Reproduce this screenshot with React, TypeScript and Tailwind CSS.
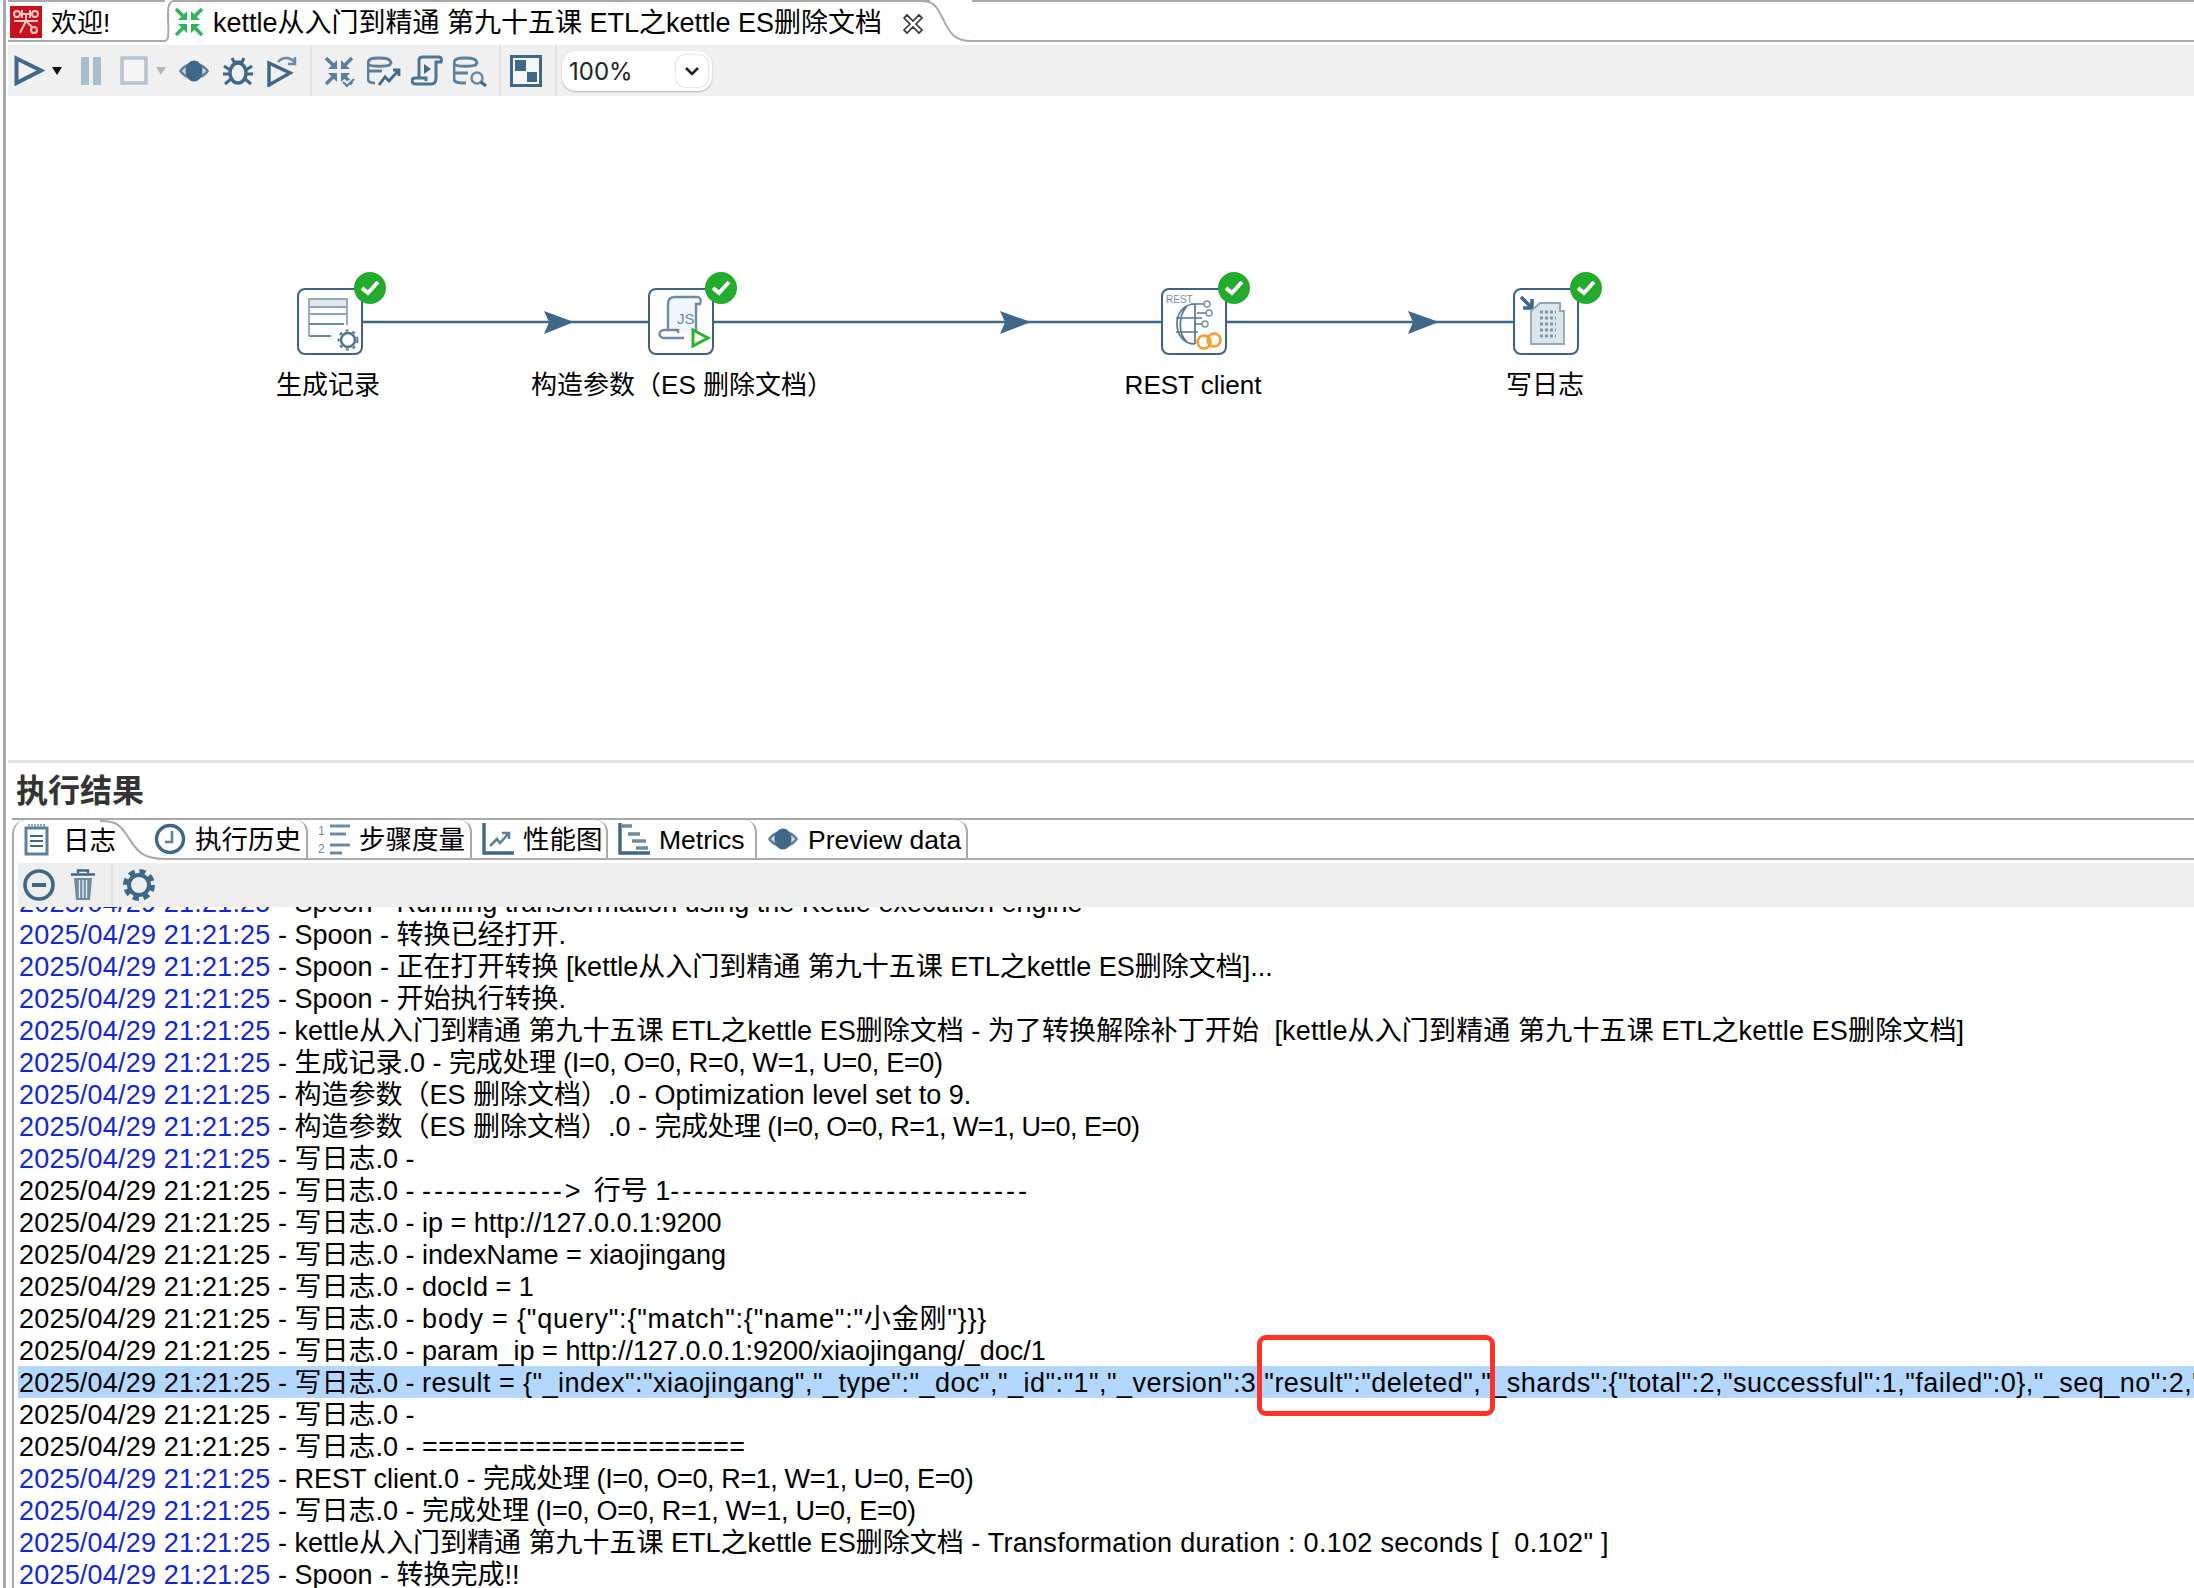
import React from "react";

const FONT = "font-['Liberation_Sans','Noto_Sans_CJK_SC',sans-serif]";
const BLUE = "#3f6888";
const TITLE = "kettle从入门到精通 第九十五课 ETL之kettle ES删除文档";

type Row = { blue?: boolean; selected?: boolean; text: string; tail?: React.ReactNode; tailClass?: string };

const STATS = "tracking-[-0.3px]";

const rows: Row[] = [
  { blue: true, text: " - Spoon - 转换已经打开." },
  { blue: true, text: ` - Spoon - 正在打开转换 [${TITLE}]...` },
  { blue: true, text: " - Spoon - 开始执行转换." },
  { blue: true, text: ` - ${TITLE} - `, tail: `为了转换解除补丁开始  [${TITLE}]`, tailClass: "tracking-[0.15px]" },
  { blue: true, text: " - 生成记录.0 - ", tail: "完成处理 (I=0, O=0, R=0, W=1, U=0, E=0)", tailClass: STATS },
  { blue: true, text: " - 构造参数（ES 删除文档）.0 - Optimization level set to 9." },
  { blue: true, text: " - 构造参数（ES 删除文档）.0 - ", tail: "完成处理 (I=0, O=0, R=1, W=1, U=0, E=0)", tailClass: "tracking-[-0.55px]" },
  { blue: true, text: " - 写日志.0 - " },
  {
    text: " - 写日志.0 - ",
    tail: (
      <>
        <span className="tracking-[2.9px]">------------&gt; </span>行号 1<span className="tracking-[3px]">------------------------------</span>
      </>
    ),
  },
  { text: " - 写日志.0 - ip = http://127.0.0.1:9200" },
  { text: " - 写日志.0 - indexName = xiaojingang" },
  { text: " - 写日志.0 - docId = 1" },
  { text: " - 写日志.0 - ", tail: 'body = {"query":{"match":{"name":"小金刚"}}}', tailClass: "tracking-[0.8px]" },
  { text: " - 写日志.0 - param_ip = http://127.0.0.1:9200/xiaojingang/_doc/1" },
  {
    selected: true,
    text: " - 写日志.0 - ",
    tail: 'result = {"_index":"xiaojingang","_type":"_doc","_id":"1","_version":3,"result":"deleted","_shards":{"total":2,"successful":1,"failed":0},"_seq_no":2,"_primary_term":1}',
    tailClass: "tracking-[0.47px]",
  },
  { text: " - 写日志.0 - " },
  { text: " - 写日志.0 - ", tail: "====================", tailClass: "tracking-[0.4px]" },
  { blue: true, text: " - REST client.0 - ", tail: "完成处理 (I=0, O=0, R=1, W=1, U=0, E=0)", tailClass: "tracking-[-0.4px]" },
  { blue: true, text: " - 写日志.0 - ", tail: "完成处理 (I=0, O=0, R=1, W=1, U=0, E=0)", tailClass: STATS },
  { blue: true, text: ` - ${TITLE} - `, tail: 'Transformation duration : 0.102 seconds [  0.102" ]', tailClass: "tracking-[0.3px]" },
  { blue: true, text: " - Spoon - 转换完成!!" },
];

function Ico({ w = 32, h = 32, className = "", children }: { w?: number; h?: number; className?: string; children: React.ReactNode }) {
  return (
    <svg width={w} height={h} viewBox={`0 0 ${w} ${h}`} fill="none" className={`shrink-0 ${className}`}>
      {children}
    </svg>
  );
}

function SpoonLogo() {
  return (
    <Ico w={32} h={32}>
      <rect width="32" height="32" fill="#c9101c" />
      <g stroke="#f6c9c9" strokeWidth="2" fill="none">
        <circle cx="7" cy="8" r="3" />
        <circle cx="25" cy="8" r="3" />
        <circle cx="24" cy="24" r="3" />
        <path d="M10 8h12M4 15h24M16 8v7l-6 12M16 15l6 6M12 4v8M20 4v8" />
      </g>
    </Ico>
  );
}

function Converge({ color, check }: { color: string; check?: boolean }) {
  return (
    <Ico w={32} h={32}>
      <g stroke={color} strokeWidth="3.4" fill="none">
        <path d="M3 3l9 9M29 3l-9 9M3 29l9-9M29 29l-9-9" />
      </g>
      <g fill={color}>
        <path d="M14 5v9H5zM18 5v9h9zM14 27v-9H5zM18 27v-9h9z" />
      </g>
      {check && <path d="M20 27l4 4 7-7" stroke={color} strokeWidth="2" fill="#f0f0f0" />}
    </Ico>
  );
}

function Run() {
  return (
    <Ico w={32} h={32}>
      <path d="M2.500 3.500L27 15.500L2.500 28z" stroke={BLUE} strokeWidth="4" strokeLinejoin="miter" />
    </Ico>
  );
}

function Eye() {
  return (
    <Ico w={32} h={24}>
      <path d="M1 12C7 1 25 1 31 12C25 23 7 23 1 12z" fill="#5f7f99" />
      <path d="M4 12C9 5 23 5 28 12C23 19 9 19 4 12z" fill="#cdd9e3" />
      <ellipse cx="16" cy="12" rx="8.500" ry="10.500" fill={BLUE} />
    </Ico>
  );
}

function Bug() {
  return (
    <Ico w={32} h={32}>
      <ellipse cx="16" cy="18" rx="8" ry="10" stroke={BLUE} strokeWidth="3.500" />
      <path d="M10 3l3 6M22 3l-3 6M12 7h8M2 11l6 4M30 11l-6 4M1 19h7M31 19h-7M3 29l6-5M29 29l-6-5" stroke={BLUE} strokeWidth="3" />
    </Ico>
  );
}

function RunOptions() {
  return (
    <Ico w={32} h={32}>
      <path d="M3 8L24 18L3 30z" stroke={BLUE} strokeWidth="3.500" />
      <path d="M12 7C17 1 25 2 29 8M29 2v7h-7" stroke="#6d8aa2" strokeWidth="2.500" />
    </Ico>
  );
}

function DbWrite() {
  return (
    <Ico w={34} h={32}>
      <path d="M24 9C24 4 20 3 12 3S1 4 1 9v15c0 3 3 4 7 4M1 9c2 3 20 3 23 0M1 16h14" stroke="#5c7f9c" strokeWidth="2.800" />
      <path d="M12 30l6-8 4 4 9-10M26 15h6v6" stroke={BLUE} strokeWidth="2.800" />
    </Ico>
  );
}

function Script() {
  return (
    <Ico w={32} h={32}>
      <path d="M8 23V5c0-2 2-3 4-3h16c2 0 3 2 2 5h-5v16c0 4-2 6-5 6H5c-3 0-4-2-4-3 0-2 1-3 3-3h11v3" stroke="#4f7492" strokeWidth="3" />
      <path d="M13 9l7 5-7 5z" fill={BLUE} />
    </Ico>
  );
}

function DbSearch() {
  return (
    <Ico w={34} h={32}>
      <path d="M24 9C24 4 20 3 12 3S1 4 1 9v15c0 3 3 4 12 4M1 9c2 3 20 3 23 0M1 18h14" stroke="#5c7f9c" strokeWidth="2.800" />
      <circle cx="24" cy="23" r="5.500" stroke="#6d8aa2" strokeWidth="2.500" />
      <path d="M28 27l5 4" stroke={BLUE} strokeWidth="3" />
    </Ico>
  );
}

function Grid() {
  return (
    <Ico w={32} h={32}>
      <rect x="1.500" y="1.500" width="29" height="29" stroke={BLUE} strokeWidth="3" fill="#f7f7f7" />
      <rect x="5" y="5" width="11" height="11" fill={BLUE} />
      <rect x="17" y="17" width="10" height="10" fill={BLUE} />
    </Ico>
  );
}

function Caret({ color, className }: { color: string; className: string }) {
  return (
    <Ico w={10} h={8} className={className}>
      <path d="M0 0h10L5 8z" fill={color} />
    </Ico>
  );
}

function TabCurveDown({ w, h, className = "" }: { w: number; h: number; className?: string }) {
  return (
    <Ico w={w} h={h} className={className}>
      <path d={`M0 1C${w * 0.22} 1 ${w * 0.3} 4 ${w * 0.4} ${h * 0.35}C${w * 0.55} ${h * 0.7} ${w * 0.6} ${h - 1} ${w} ${h - 1}`} stroke="#a9a9a9" strokeWidth="2" />
    </Ico>
  );
}

function TopTabs() {
  return (
    <div className="flex h-[42px] bg-white text-[26px] text-black">
      <div className="flex w-[157px] items-start gap-[9px] border-t-2 border-b-2 border-[#a9a9a9] pl-[2px] pt-[4px]">
        <SpoonLogo />
        <span className="leading-[34px]">欢迎!</span>
      </div>
      <Ico w={8} h={42}>
        <path d="M0 41C5 40 3 30 3 12C3 5 5 2 8 1" stroke="#a9a9a9" strokeWidth="2" />
      </Ico>
      <div className="flex w-[757px] items-start gap-[8px] border-t-2 border-[#a9a9a9] pt-[4px]">
        <Converge color="#2fb45a" />
        <span className="whitespace-nowrap text-[27px] leading-[34px]">{TITLE}</span>
        <Ico w={22} h={22} className="ml-[12px] mt-[7px]">
          <path d="M2 5l3-3 6 6 6-6 3 3-6 6 6 6-3 3-6-6-6 6-3-3 6-6z" stroke="#333" strokeWidth="1.600" />
        </Ico>
      </div>
      <TabCurveDown w={52} h={42} className="-ml-[10px]" />
      <div className="flex-1 border-b-2 border-t-2 border-[#a9a9a9]" />
    </div>
  );
}

function MainToolbar() {
  return (
    <div className="mt-[3px] flex h-[51px] items-center bg-[#f0f0f0] pl-[6px]">
      <Run />
      <Caret color="#111" className="ml-[6px]" />
      <Ico w={22} h={30} className="ml-[18px]">
        <rect x="1" y="1" width="8" height="28" fill="#a9bccb" />
        <rect x="13" y="1" width="8" height="28" fill="#a9bccb" />
      </Ico>
      <Ico w={28} h={30} className="ml-[18px]">
        <rect x="2" y="2" width="24" height="25" stroke="#b5c4d0" strokeWidth="3.500" fill="#f5f5f5" />
      </Ico>
      <Caret color="#b8b8b8" className="ml-[8px]" />
      <span className="ml-[12px]"><Eye /></span>
      <span className="ml-[12px]"><Bug /></span>
      <span className="ml-[12px]"><RunOptions /></span>
      <div className="ml-[12px] h-full w-[2px] bg-[#e2e2e2]" />
      <span className="ml-[11px]"><Converge color="#5c7f9c" check /></span>
      <span className="ml-[12px]"><DbWrite /></span>
      <span className="ml-[10px]"><Script /></span>
      <span className="ml-[10px]"><DbSearch /></span>
      <div className="ml-[12px] h-full w-[2px] bg-[#e2e2e2]" />
      <span className="ml-[9px] mr-[13px]"><Grid /></span>
      <div className="h-full w-[2px] bg-[#e2e2e2]" />
      <div className="ml-[5px] flex h-[40px] w-[150px] items-center justify-between rounded-[14px] bg-white pl-[7px] pr-[4px] shadow-[0_1px_2px_rgba(0,0,0,0.25)]">
        <span className="mt-[2px] font-['Inter',sans-serif] text-[24px] text-[#222]">100%</span>
        <div className="flex h-[32px] w-[32px] items-center justify-center rounded-[9px] bg-white shadow-[0_0_2px_rgba(0,0,0,0.35)]">
          <Ico w={16} h={10}>
            <path d="M2 2l6 6 6-6" stroke="#222" strokeWidth="2.600" />
          </Ico>
        </div>
      </div>
    </div>
  );
}

const NODES = [
  { x: 297, label: "生成记录", labelX: 328 },
  { x: 648, label: "构造参数（ES 删除文档）", labelX: 682 },
  { x: 1161, label: "REST client", labelX: 1193 },
  { x: 1513, label: "写日志", labelX: 1545 },
];

function NodeIcon({ i }: { i: number }) {
  if (i === 0) {
    return (
      <Ico w={66} h={67}>
        <path d="M12 48V11h38v26M12 19h38M12 26h38" stroke="#8fa5b8" strokeWidth="1.800" />
        <path d="M12 36h35M12 48h22" stroke="#6d8aa2" strokeWidth="2" />
        <rect x="13" y="12" width="36" height="6" fill="#dfe6ec" />
        <circle cx="51" cy="52" r="7" stroke="#52718c" strokeWidth="2.500" fill="#fff" />
        <circle cx="51" cy="52" r="9.500" stroke="#52718c" strokeWidth="2" strokeDasharray="3 4" />
      </Ico>
    );
  }
  if (i === 1) {
    return (
      <Ico w={66} h={67}>
        <path d="M20 48V16c0-5 3-7 7-7h22c3 0 5 3 3 7h-4v28" stroke="#6d8aa2" strokeWidth="2.400" fill="#f1f6fb" />
        <path d="M36 50H16c-6 0-6 -8 0-8h14v3" stroke="#6d8aa2" strokeWidth="2.400" fill="#fff" />
        <text x="29" y="36" fontSize="15" fill="#6d8aa2" fontFamily="Liberation Sans">JS</text>
        <path d="M45 42l15 8-15 8z" stroke="#26b32f" strokeWidth="3" fill="#fff" />
      </Ico>
    );
  }
  if (i === 2) {
    return (
      <Ico w={66} h={67}>
        <text x="5" y="15" fontSize="10" fill="#7891a6" fontFamily="Liberation Sans">REST</text>
        <path d="M34 16C10 16 10 56 34 56M26 18C17 28 17 46 26 54M34 16v40M15 30h26M15 44h22M30 16h14M36 25h12M34 36h10" stroke="#55778f" strokeWidth="1.700" />
        <circle cx="46" cy="16" r="3" stroke="#7891a6" strokeWidth="1.500" fill="#fff" />
        <circle cx="48" cy="25" r="3" stroke="#7891a6" strokeWidth="1.500" fill="#fff" />
        <circle cx="44" cy="36" r="3" stroke="#7891a6" strokeWidth="1.500" fill="#fff" />
        <circle cx="43" cy="54" r="6.500" stroke="#f5a02c" strokeWidth="2.600" fill="#fff" />
        <circle cx="53" cy="52" r="6.500" stroke="#f5a02c" strokeWidth="2.600" />
      </Ico>
    );
  }
  return (
    <Ico w={66} h={67}>
      <path d="M8 9l11 11M19 11v9h-9" stroke={BLUE} strokeWidth="3.500" />
      <path d="M18 56V23l9-8h20v8h4v33z" fill="#dde5ec" stroke="#8fa5b8" strokeWidth="1.800" />
      <path d="M27 24h16M27 30h16M27 36h16M27 42h16M27 48h16" stroke="#7c95aa" strokeWidth="3" strokeDasharray="3 2" />
    </Ico>
  );
}

function Canvas() {
  return (
    <div className="relative h-[664px] bg-white">
      <svg width="1600" height="60" viewBox="0 0 1600 60" className="absolute -left-[8px] top-[196px]" fill="none">
        <path d="M360 30H1515" stroke={BLUE} strokeWidth="2.400" />
        <path d="M544 19L574 30L544 42L549 30z" fill={BLUE} />
        <path d="M1000 19L1031 30L1000 42L1005 30z" fill={BLUE} />
        <path d="M1408 19L1439 30L1408 42L1413 30z" fill={BLUE} />
      </svg>
      {NODES.map((n, i) => (
        <React.Fragment key={n.label}>
          <div className="absolute top-[192px] h-[67px] w-[66px] overflow-hidden rounded-[8px] border-2 border-[#3f6282] bg-white" style={{ left: n.x - 8 }}>
            <div className="-m-[2px]">
              <NodeIcon i={i} />
            </div>
          </div>
          <div className="absolute top-[176px] flex h-[32px] w-[32px] items-center justify-center rounded-full bg-[#22ab2c]" style={{ left: n.x + 49 }}>
            <Ico w={20} h={16}>
              <path d="M2 8l6 5 10-11" stroke="#fff" strokeWidth="4" />
            </Ico>
          </div>
          <div className="absolute top-[272px] -translate-x-1/2 whitespace-nowrap text-[26px] leading-[34px] text-black" style={{ left: n.labelX - 8 }}>
            {n.label}
          </div>
        </React.Fragment>
      ))}
    </div>
  );
}

function ResultTab({ icon, label, w }: { icon: React.ReactNode; label: string; w: number }) {
  return (
    <div className="flex h-full shrink-0 items-center gap-[9px] rounded-tr-[12px] border-r-2 border-[#a9a9a9] pl-[10px]" style={{ width: w }}>
      {icon}
      <span className="mt-[3px] whitespace-nowrap">{label}</span>
    </div>
  );
}

function ResultTabs() {
  return (
    <div className="relative flex h-[42px] border-t-2 border-[#a9a9a9] text-[26.5px] text-black">
      <div className="flex h-full w-[88px] shrink-0 items-center gap-[14px] rounded-tl-[14px] border-l-2 border-[#a9a9a9] pl-[10px]">
        <Ico w={25} h={32} className="shrink-0">
          <rect x="2" y="4" width="21" height="26" stroke="#5c7f9c" strokeWidth="3" />
          <path d="M6 12h13M6 17h13M6 22h13" stroke={BLUE} strokeWidth="2" />
          <path d="M4 1.500h17" stroke="#8fa5b8" strokeWidth="3" strokeDasharray="2 1" />
        </Ico>
        <span className="mt-[3px] whitespace-nowrap">日志</span>
      </div>
      <TabCurveDown w={65} h={40} />
      <div className="flex h-full flex-1 border-b-2 border-[#a9a9a9]">
        <ResultTab
          w={143}
          label="执行历史"
          icon={
            <Ico w={32} h={32} className="-ml-[21px]">
              <circle cx="16" cy="16" r="13.500" stroke={BLUE} strokeWidth="3.400" />
              <path d="M18 8v11h-7" stroke="#5c7f9c" strokeWidth="2.600" />
            </Ico>
          }
        />
        <ResultTab
          w={164}
          label="步骤度量"
          icon={
            <Ico w={32} h={32}>
              <text x="0" y="12" fontSize="12" fill="#6d8aa2" fontFamily="Liberation Sans">1</text>
              <text x="0" y="30" fontSize="12" fill="#6d8aa2" fontFamily="Liberation Sans">2</text>
              <path d="M12 3h20M12 11h16M12 22h20M12 30h12" stroke="#6d8aa2" strokeWidth="3" />
            </Ico>
          }
        />
        <ResultTab
          w={136}
          label="性能图"
          icon={
            <Ico w={32} h={32}>
              <path d="M2 0v30h30" stroke={BLUE} strokeWidth="3.400" />
              <path d="M8 23l7-7 3 4 8-9M20 10h7v6" stroke="#5c7f9c" strokeWidth="2.600" />
            </Ico>
          }
        />
        <ResultTab
          w={149}
          label="Metrics"
          icon={
            <Ico w={32} h={32}>
              <path d="M2 0v30h30" stroke={BLUE} strokeWidth="3.400" />
              <path d="M4 3h10M10 11h12M14 18h14M18 25h12" stroke="#6d8aa2" strokeWidth="3.400" />
            </Ico>
          }
        />
        <ResultTab w={211} label="Preview data" icon={<Eye />} />
        <div className="flex-1" />
      </div>
    </div>
  );
}

function LogToolbar() {
  return (
    <div className="ml-[4px] mt-[3px] flex h-[44px] items-center bg-[#eeeeee] pl-[5px]">
      <Ico w={32} h={32}>
        <circle cx="16" cy="16" r="14" stroke={BLUE} strokeWidth="3.600" />
        <path d="M9 16h14" stroke={BLUE} strokeWidth="4" />
      </Ico>
      <Ico w={26} h={32} className="ml-[15px]">
        <path d="M1 5.500h24M8 4V1.500h10V4" stroke={BLUE} strokeWidth="2.400" />
        <path d="M4 9h18l-2 22H6z" fill="#6d8aa2" />
        <path d="M9.500 11v18M13 11v18M16.500 11v18" stroke="#eee" strokeWidth="1.400" />
      </Ico>
      <div className="ml-[15px] h-full w-[2px] bg-[#e0e0e0]" />
      <Ico w={32} h={32} className="ml-[10px]">
        <circle cx="16" cy="16" r="10" stroke={BLUE} strokeWidth="4" />
        <circle cx="16" cy="16" r="13.500" stroke={BLUE} strokeWidth="5" strokeDasharray="6 4.600" />
      </Ico>
    </div>
  );
}

function LogPanel() {
  return (
    <div className="relative ml-[4px] min-h-0 flex-1 overflow-hidden bg-white text-[27px] leading-[32px] text-black">
      <div className="-mt-[21px] whitespace-pre">
        <div className="h-[32px] pl-[1px] pt-[1px]">
          <span className="tracking-[0.2px] text-[#1226d6]">2025/04/29 21:21:25</span> - Spoon - Running transformation using the Kettle execution engine
        </div>
        {rows.map((r, i) => (
          <div key={i} className={`h-[32px] pl-[1px] pt-[1px] ${r.selected ? "bg-[#b3d7ff]" : ""}`}>
            <span className={r.blue ? "tracking-[0.2px] text-[#1226d6]" : "tracking-[0.2px]"}>2025/04/29 21:21:25</span>
            {r.text}
            {r.tail && <span className={r.tailClass}>{r.tail}</span>}
          </div>
        ))}
      </div>
      <div className="absolute left-[1239px] top-[428px] h-[81px] w-[238px] rounded-[9px] border-[5px] border-[#ff3228]" />
    </div>
  );
}

export default function App() {
  return (
    <div className={`h-[1588px] w-[2194px] overflow-hidden bg-white ${FONT}`}>
      <div className="ml-[3px] flex h-full flex-col border-l-[3px] border-[#a9a9a9] pl-[2px]">
        <TopTabs />
        <MainToolbar />
        <Canvas />
        <div className="h-[3px] bg-[#e2e2e2]" />
        <div className="flex h-[55px] items-center pl-[8px] text-[32px] font-bold text-[#333]">执行结果</div>
        <div className="ml-[4px] flex min-h-0 flex-1 flex-col">
          <ResultTabs />
          <div className="flex min-h-0 flex-1 flex-col border-l-2 border-[#a9a9a9]">
            <LogToolbar />
            <LogPanel />
          </div>
        </div>
      </div>
    </div>
  );
}
